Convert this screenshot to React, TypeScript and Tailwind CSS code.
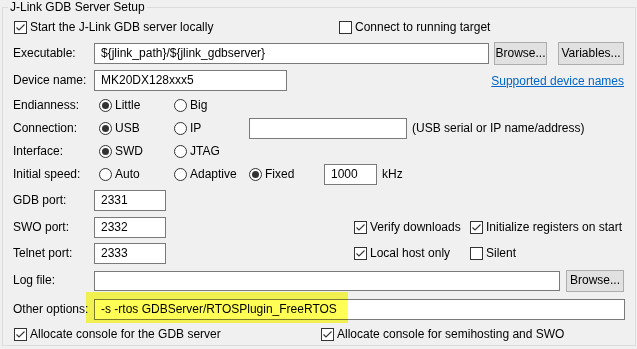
import React from 'react';

const font = { fontFamily: '"Liberation Sans", Arial, sans-serif' };

function Check({ checked = false }: { checked?: boolean }) {
  return (
    <span className="w-[13px] h-[13px] border border-[#333333] bg-white flex items-center justify-center shrink-0">
      {checked && (
        <svg width="11" height="11" viewBox="0 0 11 11">
          <polyline points="1.5,5.5 4,8 9.5,2.5" fill="none" stroke="#333333" strokeWidth="1.1" />
        </svg>
      )}
    </span>
  );
}

function CheckLabel({ checked = false, label }: { checked?: boolean; label: string }) {
  return (
    <span className="flex items-center gap-[3px] whitespace-nowrap">
      <Check checked={checked} />
      <span>{label}</span>
    </span>
  );
}

function Radio({ checked = false, label }: { checked?: boolean; label: string }) {
  return (
    <span className="flex items-center gap-[3px] w-[75px] whitespace-nowrap">
      <span className="w-[13px] h-[13px] rounded-full border border-[#333333] bg-white flex items-center justify-center shrink-0">
        {checked && <span className="w-[7px] h-[7px] rounded-full bg-[#333333]" />}
      </span>
      <span>{label}</span>
    </span>
  );
}

function Input({ value = '', w, h = 'h-[21px]' }: { value?: string; w: string; h?: string }) {
  return (
    <div className={`${w} ${h} border border-[#7a7a7a] bg-white flex items-center pl-[6px] shrink-0 whitespace-nowrap`}>
      {value}
    </div>
  );
}

function Button({ label, w, h = 'h-[23px]' }: { label: string; w: string; h?: string }) {
  return (
    <div className={`${w} ${h} border border-[#adadad] bg-[#e1e1e1] flex items-center justify-center shrink-0 whitespace-nowrap`}>
      {label}
    </div>
  );
}

function Label({ text }: { text: string }) {
  return <span className="w-[81px] shrink-0 whitespace-nowrap">{text}</span>;
}

export default function App() {
  return (
    <div className="w-[637px] h-[349px] bg-[#f0f0f0] text-[12px] leading-[15px] text-black overflow-hidden" style={font}>
      <fieldset className="ml-[2px] w-[634px] h-[346px] border border-[#dcdcdc] m-0 p-0">
        <legend className="ml-[5px] px-[2px] h-[14px] leading-[14px]">J-Link GDB Server Setup</legend>

        <div className="px-[10px]">
          <div className="h-[27px] flex items-center pl-px">
            <span className="w-[325px]">
              <CheckLabel checked label="Start the J-Link GDB server locally" />
            </span>
            <CheckLabel label="Connect to running target" />
          </div>

          <div className="h-[25px] flex items-center">
            <Label text="Executable:" />
            <Input w="w-[395px]" value="${jlink_path}/${jlink_gdbserver}" />
            <span className="ml-[5px]"><Button label="Browse..." w="w-[53px]" /></span>
            <span className="ml-[11px]"><Button label="Variables..." w="w-[66px]" /></span>
          </div>

          <div className="h-[28px] flex items-center">
            <Label text="Device name:" />
            <Input w="w-[193px]" value="MK20DX128xxx5" />
            <span className="ml-auto mr-[1px] mt-[3px] text-[#0066cc] underline whitespace-nowrap">Supported device names</span>
          </div>

          <div className="h-[22px] flex items-center">
            <Label text="Endianness:" />
            <span className="ml-[5px] flex">
              <Radio checked label="Little" />
              <Radio label="Big" />
            </span>
          </div>

          <div className="h-[24px] flex items-center">
            <Label text="Connection:" />
            <span className="ml-[5px] flex items-center">
              <Radio checked label="USB" />
              <Radio label="IP" />
            </span>
            <Input w="w-[158px]" h="h-[21px]" />
            <span className="ml-[5px] whitespace-nowrap">(USB serial or IP name/address)</span>
          </div>

          <div className="h-[22px] flex items-center">
            <Label text="Interface:" />
            <span className="ml-[5px] flex">
              <Radio checked label="SWD" />
              <Radio label="JTAG" />
            </span>
          </div>

          <div className="h-[25px] flex items-center">
            <Label text="Initial speed:" />
            <span className="ml-[5px] flex">
              <Radio label="Auto" />
              <Radio label="Adaptive" />
              <Radio checked label="Fixed" />
            </span>
            <Input w="w-[53px]" value="1000" />
            <span className="ml-[5px]">kHz</span>
          </div>

          <div className="h-[27px] flex items-center">
            <Label text="GDB port:" />
            <Input w="w-[72px]" value="2331" />
          </div>

          <div className="h-[26px] flex items-center">
            <Label text="SWO port:" />
            <Input w="w-[72px]" value="2332" />
            <span className="ml-[188px] w-[116px]">
              <CheckLabel checked label="Verify downloads" />
            </span>
            <CheckLabel checked label="Initialize registers on start" />
          </div>

          <div className="h-[26px] flex items-center">
            <Label text="Telnet port:" />
            <Input w="w-[72px]" value="2333" />
            <span className="ml-[188px] w-[116px]">
              <CheckLabel checked label="Local host only" />
            </span>
            <CheckLabel label="Silent" />
          </div>

          <div className="h-[29px] flex items-center">
            <Label text="Log file:" />
            <Input w="w-[466px]" h="h-[20px]" />
            <span className="ml-[6px]"><Button label="Browse..." w="w-[58px]" h="h-[22px]" /></span>
          </div>

          <div className="h-[28px] flex items-center relative">
            <Label text="Other options:" />
            <Input w="w-[531px]" value="-s -rtos GDBServer/RTOSPlugin_FreeRTOS" />
            <div className="absolute left-[73px] top-[-3px] w-[262px] h-[31px] bg-[#ffff55] mix-blend-multiply pointer-events-none" />
          </div>

          <div className="h-[22px] flex items-center pl-px">
            <span className="w-[307px]">
              <CheckLabel checked label="Allocate console for the GDB server" />
            </span>
            <CheckLabel checked label="Allocate console for semihosting and SWO" />
          </div>
        </div>
      </fieldset>
    </div>
  );
}
